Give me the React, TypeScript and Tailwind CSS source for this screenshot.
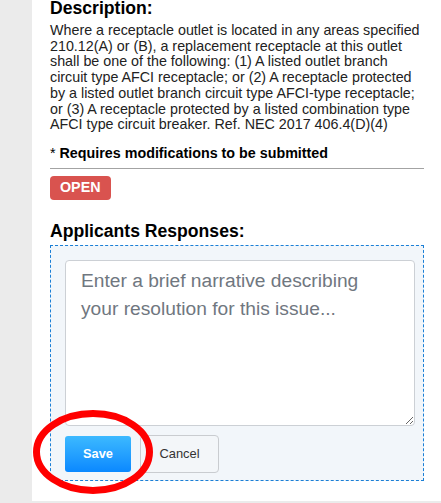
import React from 'react';

const description =
  'Where a receptacle outlet is located in any areas specified 210.12(A) or (B), a replacement receptacle at this outlet shall be one of the following: (1) A listed outlet branch circuit type AFCI receptacle; or (2) A receptacle protected by a listed outlet branch circuit type AFCI-type receptacle; or (3) A receptacle protected by a listed combination type AFCI type circuit breaker. Ref. NEC 2017 406.4(D)(4)';

const App = () => {
  return (
    <div className="flex h-[503px] w-[441px] overflow-hidden bg-[#ebebeb] font-['Liberation_Sans',Arial,sans-serif]">
      {/* white panel */}
      <div className="relative ml-[32px] h-[501px] flex-1 bg-white">
        <div className="w-[392px] pl-[18px]">
          <h3 className="text-[17.6px] font-bold leading-[16px] text-black">Description:</h3>
          <p className="mt-[7px] text-[14.3px] leading-[15.7px] text-[#222]">{description}</p>

          <div className="border-b border-[#a3a3a3] pb-[6px]">
            <p className="mt-[13px] text-[14.3px] leading-[15.7px] text-black">
              <span>* </span>
              <span className="font-bold">Requires modifications to be submitted</span>
            </p>
          </div>

          <span className="mt-[7px] inline-flex h-[24px] items-center rounded-[4px] bg-[#d9534f] px-[10px] text-[14.3px] font-bold text-white">
            OPEN
          </span>

          <h3 className="mt-[21px] text-[17.6px] font-bold leading-[20.2px] text-black">Applicants Responses:</h3>

          {/* response box */}
          <div className="mt-[4px] border border-dashed border-[#1b7fd6] bg-[#f2f6fa] pb-[7px] pl-[14px] pr-[8px] pt-[14px]">
            <textarea
              className="block h-[166px] w-full resize-y rounded-[4px] border border-[#ccd0d5] bg-white px-[15px] pt-[6px] text-[19.2px] leading-[28.5px] text-[#333] outline-none placeholder:text-[#70777f]"
              placeholder="Enter a brief narrative describing your resolution for this issue..."
            />
            <div className="mt-[9px] flex items-center gap-[9px]">
              <button className="h-[36px] w-[66px] rounded-[3px] bg-gradient-to-b from-[#3cb9ff] to-[#0a88ff] text-[12.8px] font-bold text-white">
                Save
              </button>
              <button className="h-[38px] w-[79px] rounded-[4px] border border-[#c9ccd0] bg-[#f3f6f9] text-[12.9px] text-[#333]">
                Cancel
              </button>
            </div>
          </div>
        </div>

        {/* red annotation circle */}
        <svg
          className="pointer-events-none absolute left-[1px] top-[410px]"
          width="120"
          height="84"
          viewBox="0 0 120 84"
        >
          <ellipse cx="60" cy="42" rx="56.5" ry="38.5" fill="none" stroke="#ff0000" strokeWidth="7" />
        </svg>
      </div>
    </div>
  );
};

export default App;
